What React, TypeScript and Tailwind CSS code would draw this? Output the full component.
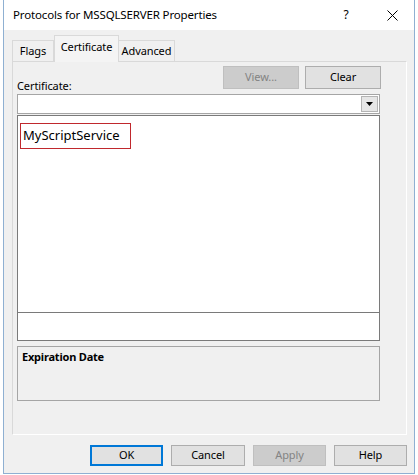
import React from "react"

const font = { fontFamily: '"Noto Sans", "Open Sans", sans-serif' }

function Button({ label, width, disabled, primary }: { label: string; width: string; disabled?: boolean; primary?: boolean }) {
  return (
    <div
      className={`${width} h-full flex items-center justify-center text-[11px] tracking-[-0.1px] border ${
        disabled
          ? "bg-[#cccccc] border-[#bfbfbf] text-[#838383]"
          : primary
            ? "bg-[#e1e1e1] border-[#0078d7] border-2 text-black"
            : "bg-[#e1e1e1] border-[#adadad] text-black"
      }`}
    >
      {label}
    </div>
  )
}

export default function App() {
  return (
    <div className="w-[418px] h-[475px] bg-white pl-[3px] pr-[3px]" style={font}>
      <div className="h-[474px] flex flex-col border-x border-b border-[#8fb0d2]">
        {/* Title bar */}
        <div className="h-[30px] bg-white flex items-center pl-[9px] text-[11.5px] tracking-[-0.15px] text-black">
          <span className="flex-1">Protocols for MSSQLSERVER Properties</span>
          <span className="w-[10px] text-center text-[12px]">?</span>
          <svg width="11" height="11" viewBox="0 0 11 11" className="ml-[36px] mr-[16px]">
            <path d="M0.5 0.5 L10.5 10.5 M10.5 0.5 L0.5 10.5" stroke="#000" strokeWidth="1" />
          </svg>
        </div>

        <div className="flex-1 bg-[#f0f0f0] flex flex-col pt-[5px] pl-[8px] pr-[7px]">
          {/* Tabs */}
          <div className="flex items-end h-[26px] text-[11px] tracking-[-0.1px] relative z-10">
            <div className="w-[42px] h-[21px] border border-b-0 border-[#d9d9d9] bg-[#f0f0f0] flex items-center justify-center">Flags</div>
            <div className="w-[65px] h-[27px] -mb-[1px] border border-b-0 border-[#d9d9d9] bg-[#f4f4f4] flex items-center justify-center pb-[3px]">Certificate</div>
            <div className="w-[57px] h-[21px] -ml-[1px] border border-b-0 border-[#d9d9d9] bg-[#f0f0f0] flex items-center justify-center">Advanced</div>
          </div>

          {/* Tab page */}
          <div className="h-[374px] border border-[#d9d9d9] border-r-white border-b-white flex flex-col pt-[4px] pl-[4px]">
            <div className="flex items-end h-[23px] w-[363px]">
              <span className="flex-1 text-[11px] tracking-[-0.1px] -mb-[5px]">Certificate:</span>
              <div className="flex gap-[6px] h-full -mr-[1px]">
                <Button label="View..." width="w-[76px]" disabled />
                <Button label="Clear" width="w-[76px]" />
              </div>
            </div>

            {/* Certificate combo */}
            <div className="mt-[5px] w-[363px] h-[20px] bg-white border border-[#a5a5a5] flex items-center justify-end pr-[1px]">
              <div className="w-[17px] h-[16px] bg-[#e6e6e6] border border-[#b4b4b4] flex items-center justify-center">
                <svg width="7" height="4" viewBox="0 0 7 4">
                  <path d="M0 0 H7 L3.5 4 Z" fill="#000" />
                </svg>
              </div>
            </div>

            {/* Certificate list */}
            <div className="mt-[1px] w-[363px] h-[198px] bg-white border border-[#7a7a7a] pt-[7px] pl-[2px]">
              <div className="w-[111px] h-[26px] border border-[#c0282d] flex items-center pl-[2px] text-[13px] text-black">
                MyScriptService
              </div>
            </div>
            <div className="-mt-[1px] w-[363px] h-[29px] bg-white border border-[#7a7a7a]" />

            {/* Expiration */}
            <div className="mt-[5px] w-[363px] h-[55px] border border-[#a5a5a5] bg-[#f0f0f0] pl-[4px] pt-[2px] text-[11px] tracking-[-0.2px] font-bold">
              Expiration Date
            </div>
          </div>

          {/* Dialog buttons */}
          <div className="mt-[10px] h-[21px] flex justify-end gap-[8px]">
            <Button label="OK" width="w-[73px]" primary />
            <Button label="Cancel" width="w-[74px]" />
            <Button label="Apply" width="w-[73px]" disabled />
            <Button label="Help" width="w-[73px]" />
          </div>
        </div>
      </div>
    </div>
  )
}
